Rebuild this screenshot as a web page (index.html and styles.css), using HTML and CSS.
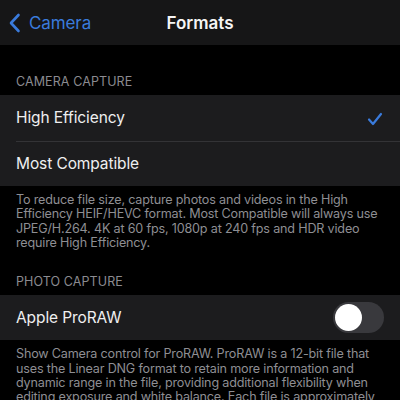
FILE: index.html
```html
<!DOCTYPE html>
<html>
<head>
<meta charset="utf-8">
<link rel="stylesheet" href="styles.css">
</head>
<body>
<div class="screen">
  <header class="nav">
    <div class="back">
      <svg class="chev" width="13" height="20" viewBox="0 0 13 20"><path d="M10.5 2 L3 10 L10.5 18" fill="none" stroke="#3a7bdc" stroke-width="2.6" stroke-linecap="round" stroke-linejoin="round"/></svg>
      <span>Camera</span>
    </div>
    <div class="title">Formats</div>
  </header>

  <div class="section-head first">CAMERA CAPTURE</div>
  <div class="group">
    <div class="row">
      <span>High Efficiency</span>
      <svg class="check" width="16" height="14" viewBox="0 0 16 14"><path d="M2 7.5 L6 12 L14 2" fill="none" stroke="#3a7bdc" stroke-width="2.2" stroke-linecap="round" stroke-linejoin="round"/></svg>
    </div>
    <div class="row divided">
      <span>Most Compatible</span>
    </div>
  </div>
  <p class="footer">To reduce file size, capture photos and videos in the High Efficiency HEIF/HEVC format. Most Compatible will always use JPEG/H.264. 4K at 60 fps, 1080p at 240 fps and HDR video require High Efficiency.</p>

  <div class="section-head second">PHOTO CAPTURE</div>
  <div class="group">
    <div class="row">
      <span>Apple ProRAW</span>
      <div class="toggle"><div class="knob"></div></div>
    </div>
  </div>
  <p class="footer">Show Camera control for ProRAW. ProRAW is a 12-bit file that uses the Linear DNG format to retain more information and dynamic range in the file, providing additional flexibility when editing exposure and white balance. Each file is approximately</p>
</div>
</body>
</html>
```
FILE: styles.css
```css
html, body {
  margin: 0;
  padding: 0;
  background: #000;
}
.screen {
  width: 400px;
  height: 400px;
  overflow: hidden;
  background: #000;
  font-family: Inter, "Liberation Sans", sans-serif;
  color: #f2f2f2;
}
.nav {
  height: 45px;
  background: #161617;
  display: flex;
  align-items: center;
  position: relative;
}
.back {
  display: flex;
  align-items: center;
  gap: 8px;
  padding-left: 8px;
  color: #3a7bdc;
  font-size: 17px;
  letter-spacing: -0.1px;
}
.title {
  position: absolute;
  left: 0;
  right: 0;
  text-align: center;
  font-size: 17px;
  font-weight: 600;
  color: #f5f5f5;
  pointer-events: none;
}
.section-head {
  padding: 0 16px;
  font-size: 12.5px;
  color: #8b8b90;
  letter-spacing: 0.1px;
  height: 20px;
  line-height: 20px;
  margin-bottom: 3px;
}
.section-head.first {
  margin-top: 27px;
}
.section-head.second {
  margin-top: 21px;
}
.group {
  background: #1c1c1e;
}
.row {
  height: 45.5px;
  margin-left: 16px;
  padding-right: 17px;
  display: flex;
  align-items: center;
  justify-content: space-between;
  font-size: 15.5px;
  letter-spacing: -0.1px;
  color: #efeff0;
  box-sizing: border-box;
}
.row.divided {
  border-top: 1px solid #333336;
}
.check {
  margin-top: 2px;
}
.toggle {
  width: 51px;
  height: 31px;
  border-radius: 16px;
  background: #39393d;
  padding: 2px;
  box-sizing: border-box;
  margin-right: -1px;
}
.knob {
  width: 27px;
  height: 27px;
  border-radius: 50%;
  background: #fff;
}
.footer {
  margin: 0;
  padding: 7px 16px 0;
  font-size: 12.6px;
  line-height: 14.4px;
  letter-spacing: -0.18px;
  color: #8e8e93;
}
```
